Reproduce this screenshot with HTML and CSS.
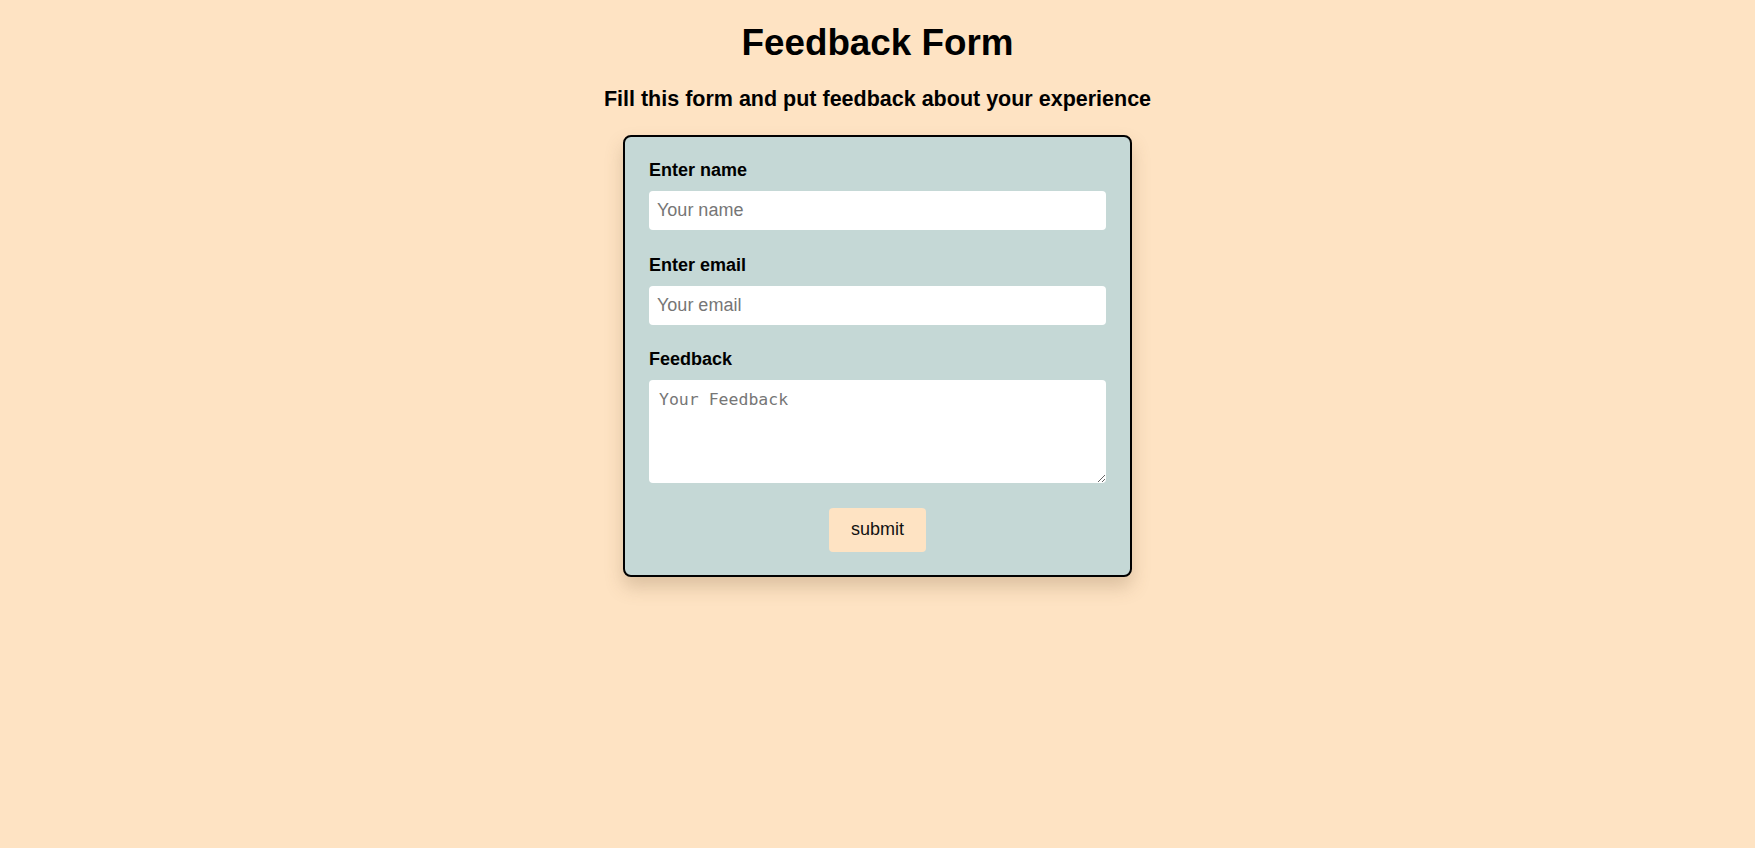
FILE: index.html
```html
<!DOCTYPE html>
<html lang="en">
<head>
<meta charset="utf-8">
<title>Feedback Form</title>
<link rel="stylesheet" href="styles.css">
</head>
<body>
  <main class="page">
    <h1 class="title">Feedback Form</h1>
    <h3 class="subtitle">Fill this form and put feedback about your experience</h3>
    <form class="card">
      <div class="field">
        <label class="label" for="name">Enter name</label>
        <input class="input" id="name" type="text" placeholder="Your name">
      </div>
      <div class="field">
        <label class="label" for="email">Enter email</label>
        <input class="input" id="email" type="email" placeholder="Your email">
      </div>
      <div class="field">
        <label class="label" for="fb">Feedback</label>
        <textarea class="textarea" id="fb" placeholder="Your Feedback"></textarea>
      </div>
      <div class="actions">
        <button class="submit" type="button">submit</button>
      </div>
    </form>
  </main>
</body>
</html>
```

FILE: styles.css
```css
html, body {
  margin: 0;
  padding: 0;
}

body {
  background: #fee3c3;
  font-family: "Liberation Sans", Arial, sans-serif;
  color: #000;
  min-height: 848px;
}

.page {
  display: flex;
  flex-direction: column;
  align-items: center;
  padding-top: 22px;
}

.title {
  margin: 0;
  font-size: 36.8px;
  font-weight: bold;
  line-height: 42px;
}

.subtitle {
  margin: 23px 0 0;
  font-size: 21.5px;
  font-weight: bold;
  line-height: 25px;
}

.card {
  margin-top: 23px;
  width: 457px;
  padding: 23px 24px 23px;
  background: #c5d8d6;
  border: 2px solid #000;
  border-radius: 8px;
  box-shadow: 0 10px 18px rgba(120, 90, 60, 0.25);
  display: flex;
  flex-direction: column;
}

.field {
  display: flex;
  flex-direction: column;
  margin-bottom: 24.5px;
}

.label {
  font-size: 18px;
  font-weight: bold;
  line-height: 21px;
  margin-bottom: 10px;
}

.input {
  box-sizing: border-box;
  width: 100%;
  height: 39px;
  padding: 0 8px;
  border: none;
  border-radius: 4px;
  background: #fff;
  font-family: "Liberation Sans", Arial, sans-serif;
  font-size: 18px;
  color: #000;
  outline: none;
}

.input::placeholder {
  color: #767676;
}

.textarea {
  box-sizing: border-box;
  width: 100%;
  height: 103px;
  padding: 10px;
  border: none;
  border-radius: 4px;
  background: #fff;
  font-family: "DejaVu Sans Mono", monospace;
  font-size: 16.5px;
  outline: none;
  resize: both;
}

.textarea::placeholder {
  color: #767676;
}

.actions {
  display: flex;
  justify-content: center;
}

.submit {
  height: 44px;
  padding: 0 22px;
  border: none;
  border-radius: 4px;
  background: #fee3c3;
  font-family: "Liberation Sans", Arial, sans-serif;
  font-size: 18px;
  color: #111;
  cursor: pointer;
}
```
